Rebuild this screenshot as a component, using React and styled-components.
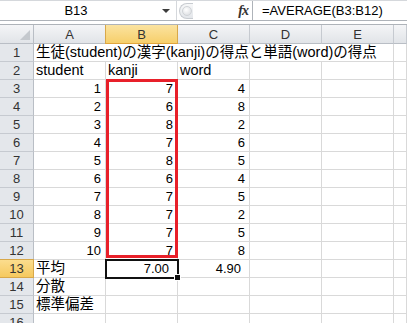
import React from "react";
import styled, { createGlobalStyle } from "styled-components";

const GlobalStyle = createGlobalStyle`
  html, body {
    margin: 0;
    padding: 0;
    background: #ffffff;
  }
  body {
    font-family: "Liberation Sans", "Noto Sans CJK JP", sans-serif;
    font-size: 13px;
    color: #000;
  }
`;

const Window = styled.div`
  width: 407px;
  height: 323px;
  overflow: hidden;
  background: #fff;
`;

const FormulaBar = styled.div`
  display: flex;
  align-items: stretch;
  height: 21px;
  box-sizing: border-box;
  border-bottom: 1px solid #aeb3b9;
  border-top: 1px solid #d5d8dc;
`;

const NameBox = styled.div`
  position: relative;
  width: 177px;
  display: flex;
  align-items: center;
  justify-content: center;
  padding-right: 24px;
  box-sizing: border-box;
  border-right: 1px solid #d5d8dc;
  line-height: 1;
`;

const DropArrow = styled.span`
  position: absolute;
  right: 6px;
  top: 8px;
  width: 0;
  height: 0;
  border-left: 4px solid transparent;
  border-right: 4px solid transparent;
  border-top: 4px solid #3c3c3c;
`;

const Grip = styled.div`
  width: 76px;
  display: flex;
  align-items: center;
  justify-content: space-between;
  padding: 0 4px 0 2px;
  box-sizing: border-box;
  border-right: 1px solid #aeb3b9;
`;

const GripPill = styled.div`
  width: 14px;
  height: 16px;
  border-radius: 9px 0 0 9px;
  border: 1px solid #c8ccd1;
  border-right: none;
  background: linear-gradient(#f7f8f9, #e3e6ea);
  display: flex;
  align-items: center;
  padding-left: 2px;
  box-sizing: border-box;
`;

const GripDot = styled.div`
  width: 8px;
  height: 8px;
  border-radius: 50%;
  background: radial-gradient(circle at 40% 35%, #ffffff, #d6d9dd);
  border: 1px solid #d0d3d7;
`;

const Fx = styled.span`
  font-family: "Liberation Serif", serif;
  font-style: italic;
  font-weight: bold;
  font-size: 14px;
  color: #333;
  letter-spacing: -1px;
  line-height: 1;
`;

const FormulaText = styled.div`
  flex: 1;
  display: flex;
  align-items: center;
  padding-left: 9px;
  white-space: nowrap;
  line-height: 1;
`;

const Spacer = styled.div`
  height: 3px;
`;

const Sheet = styled.div`
  position: relative;
  display: grid;
  grid-template-columns: 34px repeat(5, 72px) 1fr;
  grid-auto-rows: 18px;
  grid-template-rows: 19px;
  border-top: 1px solid #aeb3b9;
`;

const Corner = styled.div`
  position: relative;
  background: linear-gradient(#f4f5f7, #e1e4e8);
  border-right: 1px solid #b9bec5;
  border-bottom: 1px solid #b9bec5;

  &::after {
    content: "";
    position: absolute;
    right: 3px;
    bottom: 3px;
    width: 0;
    height: 0;
    border-left: 10px solid transparent;
    border-bottom: 10px solid #c4c8cd;
  }
`;

const ColHead = styled.div`
  display: flex;
  align-items: center;
  justify-content: center;
  background: ${(p) =>
    p.$active
      ? "linear-gradient(#fbe3a0, #f6cf6b)"
      : "linear-gradient(#f4f5f7, #e1e4e8)"};
  border-right: 1px solid ${(p) => (p.$active ? "#d8a84a" : "#c6cad0")};
  border-bottom: 1px solid ${(p) => (p.$active ? "#e0a53c" : "#b9bec5")};
  ${(p) => p.$active && "border-left: 1px solid #d8a84a; margin-left: -1px;"}
  color: #333;
  line-height: 1;
`;

const RowHead = styled.div`
  display: flex;
  align-items: center;
  justify-content: center;
  background: ${(p) => (p.$active ? "linear-gradient(#fbdd8e, #f6c95e)" : "#e4e7eb")};
  border-right: 1px solid ${(p) => (p.$active ? "#d8a84a" : "#b9bec5")};
  border-bottom: 1px solid ${(p) => (p.$active ? "#d8a84a" : "#c6cad0")};
  ${(p) => p.$active && "border-top: 1px solid #d8a84a; margin-top: -1px;"}
  color: #333;
  line-height: 1;
`;

const Cell = styled.div`
  display: flex;
  align-items: center;
  justify-content: ${(p) => (p.$num ? "flex-end" : "flex-start")};
  padding: ${(p) => (p.$fmt ? "0 8px 0 2px" : "0 4px 0 2px")};
  border-right: 1px solid #d9d9d9;
  border-bottom: 1px solid #d9d9d9;
  font-size: ${(p) => (p.$num ? "13px" : "14.5px")};
  white-space: nowrap;
  overflow: visible;
  line-height: 1;
  grid-column: ${(p) => (p.$span ? `span ${p.$span}` : "auto")};
  min-width: 0;
`;

const RedFrame = styled.div`
  position: absolute;
  left: 106px;
  top: 54px;
  width: 72px;
  height: 179px;
  box-sizing: border-box;
  border: 3px solid #e8202a;
  pointer-events: none;
`;

const Selection = styled.div`
  position: absolute;
  left: 105px;
  top: 234px;
  width: 74px;
  height: 20px;
  box-sizing: border-box;
  border: 2px solid #111;
  pointer-events: none;

  &::after {
    content: "";
    position: absolute;
    right: -4px;
    bottom: -4px;
    width: 5px;
    height: 5px;
    background: #111;
    border: 1px solid #fff;
  }
`;

const cols = ["A", "B", "C", "D", "E", ""];

const rows = [
  { n: 1, title: "生徒(student)の漢字(kanji)の得点と単語(word)の得点" },
  { n: 2, cells: [["student"], ["kanji"], ["word"]] },
  ...[
    [1, 7, 4],
    [2, 6, 8],
    [3, 8, 2],
    [4, 7, 6],
    [5, 8, 5],
    [6, 6, 4],
    [7, 7, 5],
    [8, 7, 2],
    [9, 7, 5],
    [10, 7, 8],
  ].map((v, i) => ({ n: i + 3, cells: v.map((x) => [x, "num"]) })),
  { n: 13, cells: [["平均"], ["7.00", "fmt"], ["4.90", "fmt"]] },
  { n: 14, cells: [["分散"]] },
  { n: 15, cells: [["標準偏差"]] },
  { n: 16, cells: [] },
];

export default function App() {
  return (
    <Window>
      <GlobalStyle />
      <FormulaBar>
        <NameBox>
          B13
          <DropArrow />
        </NameBox>
        <Grip>
          <GripPill>
            <GripDot />
          </GripPill>
          <Fx>fx</Fx>
        </Grip>
        <FormulaText>=AVERAGE(B3:B12)</FormulaText>
      </FormulaBar>
      <Spacer />
      <Sheet>
        <Corner />
        {cols.map((c, i) => (
          <ColHead key={i} $active={c === "B"}>
            {c}
          </ColHead>
        ))}
        {rows.map((r) => (
          <React.Fragment key={r.n}>
            <RowHead $active={r.n === 13}>{r.n}</RowHead>
            {r.title ? (
              <>
                <Cell $span={5}>{r.title}</Cell>
                <Cell />
              </>
            ) : (
              cols.map((c, i) => {
                const cell = r.cells[i];
                return (
                  <Cell
                    key={i}
                    $num={cell && cell[1]}
                    $fmt={cell && cell[1] === "fmt"}
                  >
                    {cell ? cell[0] : ""}
                  </Cell>
                );
              })
            )}
          </React.Fragment>
        ))}
        <RedFrame />
        <Selection />
      </Sheet>
    </Window>
  );
}
